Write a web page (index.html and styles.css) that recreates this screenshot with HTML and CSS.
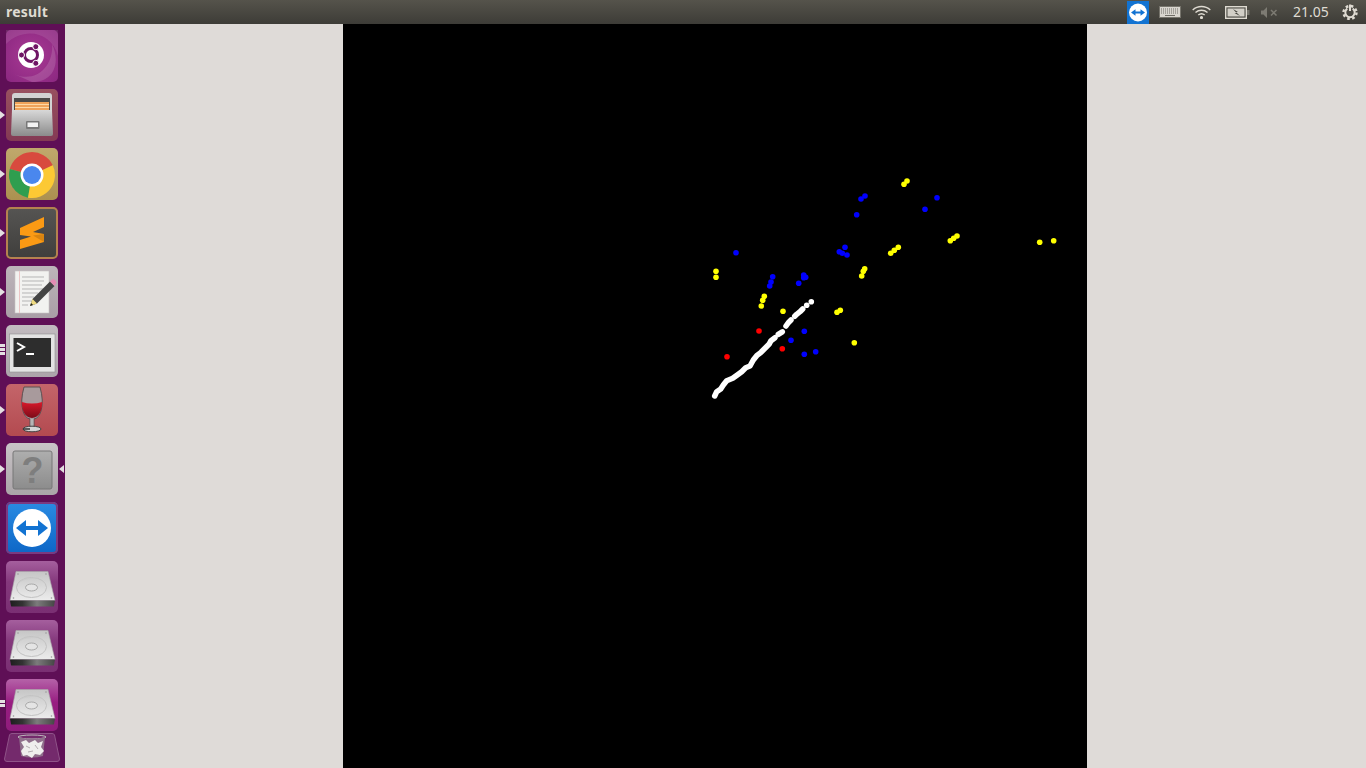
FILE: index.html
```html
<!DOCTYPE html>
<html lang="en">
<head>
<meta charset="utf-8">
<title>result</title>
<link rel="stylesheet" href="styles.css">
</head>
<body>
<svg class="defs" width="0" height="0" aria-hidden="true">
  <defs>
    <linearGradient id="hddTop" x1="0" y1="0" x2="0" y2="1"><stop offset="0" stop-color="#c6c6c6"/><stop offset="1" stop-color="#ececec"/></linearGradient>
    <linearGradient id="hddFront" x1="0" y1="0" x2="1" y2="0"><stop offset="0" stop-color="#1e1e1e"/><stop offset=".28" stop-color="#333"/><stop offset=".6" stop-color="#7c7c7c"/><stop offset="1" stop-color="#454545"/></linearGradient>
    <linearGradient id="metal" x1="0" y1="0" x2="0" y2="1"><stop offset="0" stop-color="#d8d8d8"/><stop offset="1" stop-color="#8b8b8b"/></linearGradient>
    <linearGradient id="helpBox" x1="0" y1="0" x2="0" y2="1"><stop offset="0" stop-color="#aeaeae"/><stop offset="1" stop-color="#8c8c8c"/></linearGradient>
    <linearGradient id="wine" x1="0" y1="0" x2="0" y2="1"><stop offset="0" stop-color="#d8192a"/><stop offset="1" stop-color="#7b0b18"/></linearGradient>
    <symbol id="hdd" viewBox="0 0 52 52">
      <path d="M10 10.500H42L49 39.500H4Z" fill="url(#hddTop)" stroke="#a8a8a8" stroke-width=".6"/>
      <path d="M4 39.500H49L48 45Q48 45.500 47 45.500H6Q5 45.500 5 45Z" fill="url(#hddFront)"/>
      <ellipse cx="25.500" cy="26.500" rx="15" ry="10" fill="none" stroke="#c2c2c2"/>
      <ellipse cx="25.500" cy="26.500" rx="6" ry="3.500" fill="#e4e4e4" stroke="#a8a8a8"/>
      <path d="M36 13C32 19 22 16 15 20" fill="none" stroke="#cbcbcb"/>
      <circle cx="12" cy="13" r=".8" fill="#999"/><circle cx="40" cy="13" r=".8" fill="#999"/><circle cx="7.500" cy="37" r=".8" fill="#999"/><circle cx="45.500" cy="37" r=".8" fill="#999"/>
    </symbol>
  </defs>
</svg>

<header class="panel">
  <span class="panel-title">result</span>
  <div class="tray">
    <svg class="tray-tv" width="22" height="23" viewBox="0 0 22 23"><rect width="22" height="23" fill="#1273d2"/><circle cx="11" cy="11.500" r="9" fill="#fff"/><path d="M4 11.500L8.500 8.300V10.500H13.500V8.300L18 11.500L13.500 14.700V12.500H8.500V14.700Z" fill="#1273d2"/></svg>
    <svg class="tray-kb" width="22" height="12" viewBox="0 0 22 12"><rect x=".5" y=".5" width="21" height="11" fill="#d9d6cf" stroke="#77756d"/><path d="M2 3H20M2 5H20M2 7H20" stroke="#6f6d66" stroke-dasharray="1 1"/><path d="M6 9.500H16" stroke="#6f6d66"/></svg>
    <svg class="tray-wifi" width="19" height="14" viewBox="0 0 19 14" fill="none" stroke="#dfdbd2" stroke-width="1.400"><path d="M.7 5A13 13 0 0 1 18.300 5"/><path d="M3.500 7.500A9 9 0 0 1 15.500 7.500"/><path d="M6.300 10A5 5 0 0 1 12.700 10"/><circle cx="9.500" cy="12.500" r=".9" fill="#dfdbd2"/></svg>
    <svg class="tray-bat" width="25" height="13" viewBox="0 0 25 13"><rect x=".7" y=".7" width="20.600" height="11.600" fill="none" stroke="#dfdbd2" stroke-width="1.400"/><rect x="2.500" y="2.500" width="17" height="8" fill="#d2cfc7"/><path d="M8 3L13 6H11L15 10L9.500 7H11.500Z" fill="#3f3e38"/><rect x="22" y="4" width="2.500" height="5" fill="#77756d"/></svg>
    <svg class="tray-vol" width="17" height="11" viewBox="0 0 17 11"><path d="M0 3.500H2.500L6 0V11L2.500 7.500H0Z" fill="#7d7b73"/><path d="M10 3L15.500 8.500M15.500 3L10 8.500" stroke="#7d7b73" stroke-width="1.500"/></svg>
    <span class="clock">21.05</span>
    <svg class="tray-gear" width="16" height="16" viewBox="0 0 16 16" fill="none" stroke="#dfdbd2"><circle cx="8" cy="8.500" r="6.500" stroke-width="2.400" stroke-dasharray="2.600 2.500"/><path d="M5.300 4.600A4.700 4.700 0 1 0 10.700 4.600" stroke-width="2"/><path d="M8 0.500V7" stroke-width="2"/></svg>
  </div>
</header>

<div class="desktop">
  <nav class="launcher">
    <div class="tile tile-dash">
      <svg class="icon" viewBox="0 0 52 52"><path d="M0 14C18 -4 46 2 52 26V0H0Z" fill="#fff" opacity=".1"/><path d="M8 44C30 54 48 36 46 14C54 30 50 52 26 52Z" fill="#fff" opacity=".14"/><circle cx="25" cy="25" r="13" fill="#fff"/><circle cx="25" cy="25" r="6.500" fill="none" stroke="#6f1565" stroke-width="3"/><circle cx="15.500" cy="25" r="3" fill="#6f1565" stroke="#fff"/><circle cx="29.800" cy="16.700" r="3" fill="#6f1565" stroke="#fff"/><circle cx="29.800" cy="33.300" r="3" fill="#6f1565" stroke="#fff"/></svg>
    </div>
    <div class="tile tile-files pip">
      <svg class="icon" viewBox="0 0 52 52"><path d="M6 7Q6 4 9 4H43Q46 4 46 7V22H6Z" fill="#d2d2d2"/><rect x="8" y="9" width="36" height="13" fill="#4c4a48"/><rect x="9" y="13" width="34" height="8" fill="#f0a35a"/><path d="M9 15.500H43M9 18.500H43" stroke="#ffd9a6"/><path d="M6 21H46L47 45Q47 47 45 47H7Q5 47 5 45Z" fill="url(#metal)"/><rect x="20" y="32" width="13.500" height="8" rx="1" fill="#787878"/><rect x="21.500" y="33.500" width="10.500" height="4.500" fill="#f2f2f2"/></svg>
    </div>
    <div class="tile tile-chrome pip">
      <svg class="icon" viewBox="0 0 52 52"><path d="M26 27L46.800 17.300A23 23 0 0 0 3.800 21Z" fill="#d84a3e"/><path d="M26 27L3.800 21A23 23 0 0 0 22 49.650Z" fill="#2f9e4f"/><path d="M26 27L22 49.650A23 23 0 0 0 46.800 17.300Z" fill="#fcc934"/><circle cx="26" cy="27" r="11.500" fill="#fff"/><circle cx="26" cy="27" r="9" fill="#4a87ee"/></svg>
    </div>
    <div class="tile tile-sublime pip">
      <svg class="icon" viewBox="0 0 52 52"><path d="M14 21L38 10V20L27 25L38 27V35L14 42V33L25 29.500L14 28Z" fill="#fb9a14"/><path d="M27 28.500L38 27V35Z" fill="#d98410"/></svg>
    </div>
    <div class="tile tile-gedit pip">
      <svg class="icon" viewBox="0 0 52 52"><rect x="9" y="5" width="34" height="42" fill="#f2f2f0" stroke="#c6c2c4" stroke-width=".6"/><path d="M13.500 5V47" stroke="#ecc6c6"/><path d="M16 11H38M16 15H38M16 19H36M16 23H38M16 27H32M16 31H28M16 35H26M16 39H22" stroke="#b5b5b5"/><path d="M24 40L26.500 33L44 15.500L48.500 20L31 37.500Z" fill="#444"/><path d="M24 40L26.500 33L31 37.500Z" fill="#f0dc82"/><path d="M24 40L25.100 36.900L27.100 38.900Z" fill="#222"/><path d="M44 15.500L46 13.500Q47 12.500 48.500 13.500L50 15Q51 16.500 50 17.500L48.500 20Z" fill="#e38cb4"/></svg>
    </div>
    <div class="tile tile-term pip-lines">
      <svg class="icon" viewBox="0 0 52 52"><rect x="3.500" y="9" width="45.500" height="38" fill="#e3e3e3" stroke="#8f8f8f" stroke-width=".6"/><rect x="7.500" y="13" width="37.500" height="29" fill="#2d2d2d"/><path d="M11 18L18 22L11 26" fill="none" stroke="#fff" stroke-width="2"/><path d="M20 29H28" stroke="#fff" stroke-width="2"/></svg>
    </div>
    <div class="tile tile-wine pip">
      <svg class="icon" viewBox="0 0 52 52"><path d="M18 3H34Q38 17 35 27Q33 34 28 35V42H24V35Q19 34 17 27Q14 17 18 3Z" fill="#a89a9c" stroke="#5c5052"/><path d="M15.800 18Q26 21 36.200 18Q36 33 26 34Q16 33 15.800 18Z" fill="url(#wine)"/><rect x="24.500" y="35" width="3" height="9" fill="#b5b5b5"/><ellipse cx="26" cy="45" rx="9" ry="2.800" fill="#d5d5d5" stroke="#444"/><path d="M17 45H24" stroke="#333" stroke-width="1.500"/></svg>
    </div>
    <div class="tile tile-help pip pip-both">
      <svg class="icon" viewBox="0 0 52 52"><rect x="7" y="8" width="39" height="38" rx="2" fill="url(#helpBox)" stroke="#777"/><text x="26.500" y="40" class="help-mark">?</text></svg>
    </div>
    <div class="tile tile-tv">
      <svg class="icon" viewBox="0 0 52 52"><circle cx="26" cy="26" r="19" fill="#fff"/><path d="M10 26L20 18V24H32V18L42 26L32 34V28H20V34Z" fill="#1273d2"/></svg>
    </div>
    <div class="tile tile-hdd"><svg class="icon"><use href="#hdd"/></svg></div>
    <div class="tile tile-hdd"><svg class="icon"><use href="#hdd"/></svg></div>
    <div class="tile tile-hdd tile-hdd-active pip-lines pip-lines-two"><svg class="icon"><use href="#hdd"/></svg></div>
    <svg class="trash" width="56" height="29" viewBox="0 0 56 29"><path d="M8 .5H48Q50 .5 50.500 2L55.500 26Q55.500 28.500 53 28.500H3Q.5 28.500 .5 26L5.500 2Q6 .5 8 .5Z" fill="#742a6c" stroke="#8f5488"/><ellipse cx="28" cy="4" rx="14" ry="2" fill="none" stroke="#bdb9bc"/><path d="M15 4L17 23Q28 26 39 23L41 4Q28 8 15 4Z" fill="#8f6f8b"/><path d="M17 9L22 7L25 10L31 7L34 10L39 8L37 14L40 18L36 22L31 21L28 25L23 22L19 23L17 18L20 14Z" fill="#efeeed"/><path d="M22 13L26 15M31 12L34 16M24 19L29 18" stroke="#b3adb1"/></svg>
  </nav>
  <div class="workspace">
    <div class="plot">
      <svg class="plot-svg" viewBox="343 24 744 744">
        <g class="dots-blue">
          <circle cx="736" cy="252.700" r="2.800"/><circle cx="772.700" cy="276.700" r="2.800"/><circle cx="771" cy="282" r="2.800"/><circle cx="769.700" cy="286" r="2.800"/><circle cx="798.700" cy="283.300" r="2.800"/><circle cx="803.700" cy="275" r="2.800"/><circle cx="803.700" cy="277.700" r="2.800"/><circle cx="805.700" cy="277.300" r="2.800"/><circle cx="839.300" cy="251.700" r="2.800"/><circle cx="842.300" cy="253.300" r="2.800"/><circle cx="847" cy="255" r="2.800"/><circle cx="845" cy="247.300" r="2.800"/><circle cx="856.700" cy="214.700" r="2.800"/><circle cx="861" cy="199" r="2.800"/><circle cx="865" cy="196" r="2.800"/><circle cx="804.300" cy="331.300" r="2.800"/><circle cx="791" cy="340.300" r="2.800"/><circle cx="804.300" cy="354.300" r="2.800"/><circle cx="815.700" cy="351.700" r="2.800"/><circle cx="937" cy="197.700" r="2.800"/><circle cx="925" cy="209.300" r="2.800"/>
        </g>
        <g class="dots-yellow">
          <circle cx="716" cy="271.300" r="2.800"/><circle cx="716" cy="277.300" r="2.800"/><circle cx="864.700" cy="268.700" r="2.800"/><circle cx="863.300" cy="271.300" r="2.800"/><circle cx="861.700" cy="276" r="2.800"/><circle cx="764.300" cy="296.300" r="2.800"/><circle cx="762.700" cy="300.300" r="2.800"/><circle cx="761.300" cy="306" r="2.800"/><circle cx="783" cy="311.300" r="2.800"/><circle cx="840.300" cy="310.300" r="2.800"/><circle cx="837" cy="312.300" r="2.800"/><circle cx="854.300" cy="342.700" r="2.800"/><circle cx="907" cy="181" r="2.800"/><circle cx="904" cy="184.300" r="2.800"/><circle cx="957" cy="236" r="2.800"/><circle cx="953.700" cy="238.300" r="2.800"/><circle cx="950.300" cy="240.700" r="2.800"/><circle cx="898.300" cy="247.300" r="2.800"/><circle cx="894.300" cy="250.300" r="2.800"/><circle cx="890.700" cy="253.300" r="2.800"/><circle cx="1039.700" cy="242.300" r="2.800"/><circle cx="1053.700" cy="240.700" r="2.800"/>
        </g>
        <g class="dots-red">
          <circle cx="759" cy="331" r="2.800"/><circle cx="727" cy="356.700" r="2.800"/><circle cx="782.300" cy="348.700" r="2.800"/>
        </g>
        <g class="dots-white">
          <circle cx="811.300" cy="301.700" r="2.800"/><circle cx="806.700" cy="305.300" r="2.800"/>
          <polyline class="track" points="802.700,309 800,311.700 796.700,314.300 794.700,316.300"/>
          <polyline class="track" points="791,320 788.300,322.700 786,326"/>
          <polyline class="track" points="782.300,331.800 778.300,334.300"/>
          <polyline class="track" points="775,337.700 771,340.700 769,344.300 765,348.300 761,352.300 756.700,355.700 753.300,360 750,366 745.700,367.700 741.700,371.700 737.300,375 732.700,378.300 726.700,380.700 723.300,385 720.700,389 716.700,391.700 714.700,396"/>
        </g>
      </svg>
    </div>
  </div>
</div>
</body>
</html>
```
FILE: styles.css
```css
* { box-sizing: border-box; }
html, body { margin: 0; height: 100%; }
body {
  width: 1366px;
  height: 768px;
  overflow: hidden;
  display: flex;
  flex-direction: column;
  font-family: "Noto Sans", "Open Sans", sans-serif;
  background: #dfdbd8;
}
.defs { position: absolute; }

/* top panel */
.panel {
  flex: 0 0 24px;
  height: 24px;
  display: flex;
  align-items: center;
  padding: 0 8px 0 6px;
  background: linear-gradient(#55534b, #3d3c37);
  color: #dfdbd2;
  font-size: 14px;
}
.panel-title { font-weight: 700; font-size: 14px; line-height: 24px; letter-spacing: .2px; }
.tray { margin-left: auto; display: flex; align-items: center; height: 24px; }
.tray svg { display: block; flex: none; }
.tray-tv { margin-right: 10px; }
.tray-kb { margin-right: 11px; }
.tray-wifi { margin-right: 14px; }
.tray-bat { margin-right: 11px; }
.tray-vol { margin-right: 15px; }
.clock { width: 36px; font-size: 14px; line-height: 24px; white-space: nowrap; margin-right: 13px; }

/* desktop */
.desktop { flex: 1 1 auto; display: flex; min-height: 0; }
.launcher {
  flex: 0 0 65px;
  height: 744px;
  overflow: hidden;
  display: flex;
  flex-direction: column;
  align-items: center;
  gap: 7px;
  padding-top: 6px;
  padding-right: 1px;
  background: #5f0f56;
}
.tile {
  position: relative;
  flex: 0 0 52px;
  width: 52px;
  height: 52px;
  border-radius: 5px;
}
.icon { display: block; width: 52px; height: 52px; }

.tile-dash { background: radial-gradient(circle at 50% 50%, #a83a94, #8b2780); }
.tile-files { background: linear-gradient(#98505f, #843a54); }
.tile-chrome { background: linear-gradient(#c0a86c, #ab9150); }
.tile-sublime { background: linear-gradient(#565553, #3f3e3c); box-shadow: inset 0 0 0 2px #b5824f; }
.tile-gedit { background: linear-gradient(#bdb5ba, #a99ea6); }
.tile-term { background: linear-gradient(#c2bbc0, #aca4aa); }
.tile-wine { background: linear-gradient(#c4656a, #b34a50); }
.tile-help { background: linear-gradient(#c9c4c7, #aaa4a8); }
.tile-tv { background: linear-gradient(#2a8be2, #0d66c6); box-shadow: inset 0 0 0 2px #7a3a80; }
.tile-hdd { background: linear-gradient(#a55f9e, #84387c 40%, #7a2f73); }
.tile-hdd-active { background: linear-gradient(#b562a8, #981d81 45%, #8f1c7c); }
.help-mark { font-family: "Liberation Sans", sans-serif; font-size: 36px; font-weight: 700; fill: #7e7e7e; text-anchor: middle; }

/* launcher pips */
.pip::before {
  content: "";
  position: absolute;
  left: -6px;
  top: 22px;
  border-style: solid;
  border-width: 4px 0 4px 5px;
  border-color: transparent transparent transparent #e4e0e2;
}
.pip-both::after {
  content: "";
  position: absolute;
  right: -6px;
  top: 22px;
  border-style: solid;
  border-width: 4px 5px 4px 0;
  border-color: transparent #e4e0e2 transparent transparent;
}
.pip-lines::before {
  content: "";
  position: absolute;
  left: -6px;
  top: 19px;
  width: 5px;
  height: 3px;
  background: #e4e0e2;
  box-shadow: 0 4px 0 #e4e0e2, 0 8px 0 #e4e0e2;
}
.pip-lines-two::before { top: 21px; box-shadow: 0 4px 0 #e4e0e2; }

.trash { flex: none; display: block; margin-top: -5px; }

/* main window */
.workspace {
  flex: 1 1 auto;
  display: flex;
  justify-content: center;
  background: #dfdbd8;
  padding-right: 1px;
}
.plot { width: 744px; height: 744px; background: #000; }
.plot-svg { display: block; width: 744px; height: 744px; }
.dots-blue { fill: #0000ff; }
.dots-yellow { fill: #ffff00; }
.dots-red { fill: #ff0000; }
.dots-white { fill: #ffffff; }
.track { fill: none; stroke: #ffffff; stroke-width: 5.500; stroke-linecap: round; stroke-linejoin: round; }
```
